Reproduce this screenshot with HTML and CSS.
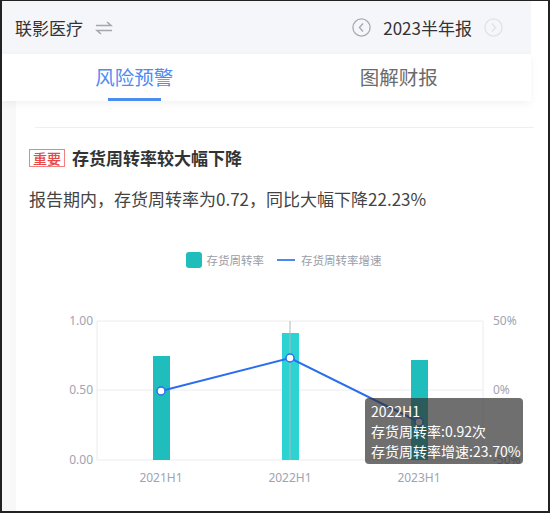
FILE: index.html
```html
<!DOCTYPE html>
<html lang="zh-CN">
<head>
    <meta charset="UTF-8">
    <title>联影医疗 风险预警</title>
    <link rel="stylesheet" href="styles.css">
</head>
<body>
<div class="frame">
    <header class="topbar">
        <div class="company">
            <span>联影医疗</span>
            <svg class="swap" width="18" height="14" viewBox="0 0 18 14">
                <path d="M1 4.5 H16 L12 1" />
                <path d="M17 9.5 H2 L6 13" />
            </svg>
        </div>
        <div class="period">
            <svg class="nav-btn" width="19" height="19" viewBox="0 0 19 19">
                <circle cx="9.5" cy="9.5" r="8.6" />
                <path d="M11 5.5 L7.5 9.5 L11 13.5" />
            </svg>
            <span>2023半年报</span>
            <svg class="nav-btn disabled" width="19" height="19" viewBox="0 0 19 19">
                <circle cx="9.5" cy="9.5" r="8.6" />
                <path d="M8 5.5 L11.5 9.5 L8 13.5" />
            </svg>
        </div>
    </header>

    <nav class="tabs">
        <div class="tab active">风险预警</div>
        <div class="tab">图解财报</div>
    </nav>

    <div class="page">
        <main class="content">
            <div class="divider"></div>

            <div class="alert-head">
                <span class="tag">重要</span>
                <h2>存货周转率较大幅下降</h2>
            </div>
            <p class="desc">报告期内，存货周转率为0.72，同比大幅下降22.23%</p>

            <div class="legend">
                <span class="legend-box"></span>
                <span class="legend-text">存货周转率</span>
                <span class="legend-line"></span>
                <span class="legend-text">存货周转率增速</span>
            </div>

            <div class="chart">
                <svg width="532" height="190" viewBox="0 0 532 190">
                    <!-- grid -->
                    <g class="grid">
                        <line x1="81" y1="21" x2="467" y2="21" />
                        <line x1="81" y1="90" x2="467" y2="90" />
                        <line x1="81" y1="160" x2="467" y2="160" />
                        <line x1="81" y1="21" x2="81" y2="160" />
                        <line x1="467" y1="21" x2="467" y2="160" />
                    </g>
                    <!-- left axis -->
                    <g class="axis-label" text-anchor="end">
                        <text x="77" y="25">1.00</text>
                        <text x="77" y="94">0.50</text>
                        <text x="77" y="164">0.00</text>
                    </g>
                    <!-- right axis (-50% sits under the tooltip) -->
                    <g class="axis-label">
                        <text x="477" y="25">50%</text>
                        <text x="477" y="94">0%</text>
                        <text x="477" y="164">-50%</text>
                    </g>
                    <!-- x axis -->
                    <g class="axis-label" text-anchor="middle">
                        <text x="145" y="182">2021H1</text>
                        <text x="274" y="182">2022H1</text>
                        <text x="403" y="182">2023H1</text>
                    </g>
                    <!-- bars -->
                    <rect class="bar" x="137" y="56" width="17" height="104" />
                    <rect class="bar hover" x="266" y="33" width="17" height="127" />
                    <rect class="bar" x="395" y="60" width="17" height="100" />
                    <!-- pointer -->
                    <line class="pointer" x1="274" y1="21" x2="274" y2="160" />
                    <!-- growth line -->
                    <polyline class="growth" points="145,91 274,58 403,122" />
                    <circle class="dot" cx="145" cy="91" r="4" />
                    <circle class="dot" cx="274" cy="58" r="4" />
                    <circle class="dot" cx="403" cy="122" r="4" />
                </svg>
                <div class="tooltip">
                    <div>2022H1</div>
                    <div>存货周转率:0.92次</div>
                    <div>存货周转率增速:23.70%</div>
                </div>
            </div>
        </main>
    </div>
</div>
</body>
</html>
```

FILE: styles.css
```css
* { box-sizing: border-box; }
body { margin: 0; font-family: "Noto Sans CJK SC", "Noto Sans", sans-serif; color: #333; }

.frame { width: 550px; height: 513px; border: 2px solid #222; border-top-width: 1px; background: #fff; display: flex; flex-direction: column; overflow: hidden; }

.topbar { width: 529px; height: 53px; flex: none; background: #f5f6fa; display: flex; align-items: center; justify-content: space-between; padding: 0 28px 0 13px; font-size: 17px; color: #333; }
.company { display: flex; align-items: center; gap: 12px; }
.swap path { fill: none; stroke: #a4a7ae; stroke-width: 1.5; }
.period { display: flex; align-items: center; gap: 12px; }
.nav-btn circle { fill: none; stroke: #a8aab2; stroke-width: 1.3; }
.nav-btn path { fill: none; stroke: #a8aab2; stroke-width: 1.4; }
.nav-btn.disabled circle, .nav-btn.disabled path { stroke: #e0e1e6; }

.tabs { width: 529px; height: 47px; flex: none; display: flex; background: #fff; box-shadow: 0 3px 8px rgba(0, 0, 0, 0.05); position: relative; z-index: 1; }
.tab { flex: 1; display: flex; align-items: center; justify-content: center; font-size: 19.5px; color: #6b6b6b; position: relative; padding-bottom: 3px; }
.tab.active { color: #4f8cf2; }
.tab.active::after { content: ""; position: absolute; left: 50%; bottom: 0; width: 53px; height: 3px; margin-left: -26px; background: #4a8cf0; }

.page { flex: 1; display: flex; background: #f8f8f9; }
.content { flex: 1; margin-left: 14px; background: #fff; padding: 0 0 0 13px; }

.divider { height: 1px; background: #efeff2; margin: 26px 14px 0 6px; }

.alert-head { display: flex; align-items: center; margin-top: 21px; }
.tag { font-size: 14px; line-height: 16px; padding: 0 3px; border: 1px solid #f28080; color: #e54848; font-weight: 500; }
.alert-head h2 { margin: 0 0 0 7px; font-size: 17px; line-height: 18px; font-weight: bold; color: #333; }

.desc { margin: 19px 0 0; font-size: 17px; line-height: 26px; color: #444; }

.legend { display: flex; align-items: center; justify-content: center; margin: 40px 0 0 -10px; height: 15px; }
.legend-box { width: 16px; height: 16px; border-radius: 3px; background: #20bdbd; margin-right: 5px; }
.legend-text { font-size: 11.5px; color: #9a9da8; }
.legend-line { width: 18px; height: 2px; background: #5086f2; margin: 0 6px 0 13px; }

.chart { position: relative; margin: 33px 0 0 -13px; height: 190px; }
.chart svg { display: block; }
.grid line { stroke: #ececef; stroke-width: 1; }
.axis-label text { font-family: "Noto Sans", sans-serif; font-size: 12px; fill: #a0a3b1; }
.bar { fill: #20bdbd; }
.bar.hover { fill: #2cd3d3; }
.pointer { stroke: #b5b5b5; stroke-width: 1; }
.growth { fill: none; stroke: #2a6ef0; stroke-width: 2; }
.dot { fill: #fff; stroke: #2a6ef0; stroke-width: 1.5; }

.tooltip { position: absolute; left: 349px; top: 98px; width: 158px; height: 66px; padding: 3px 6px; border-radius: 4px; background: rgba(50, 50, 50, 0.7); color: #fff; font-size: 14px; line-height: 20px; white-space: nowrap; }
```
